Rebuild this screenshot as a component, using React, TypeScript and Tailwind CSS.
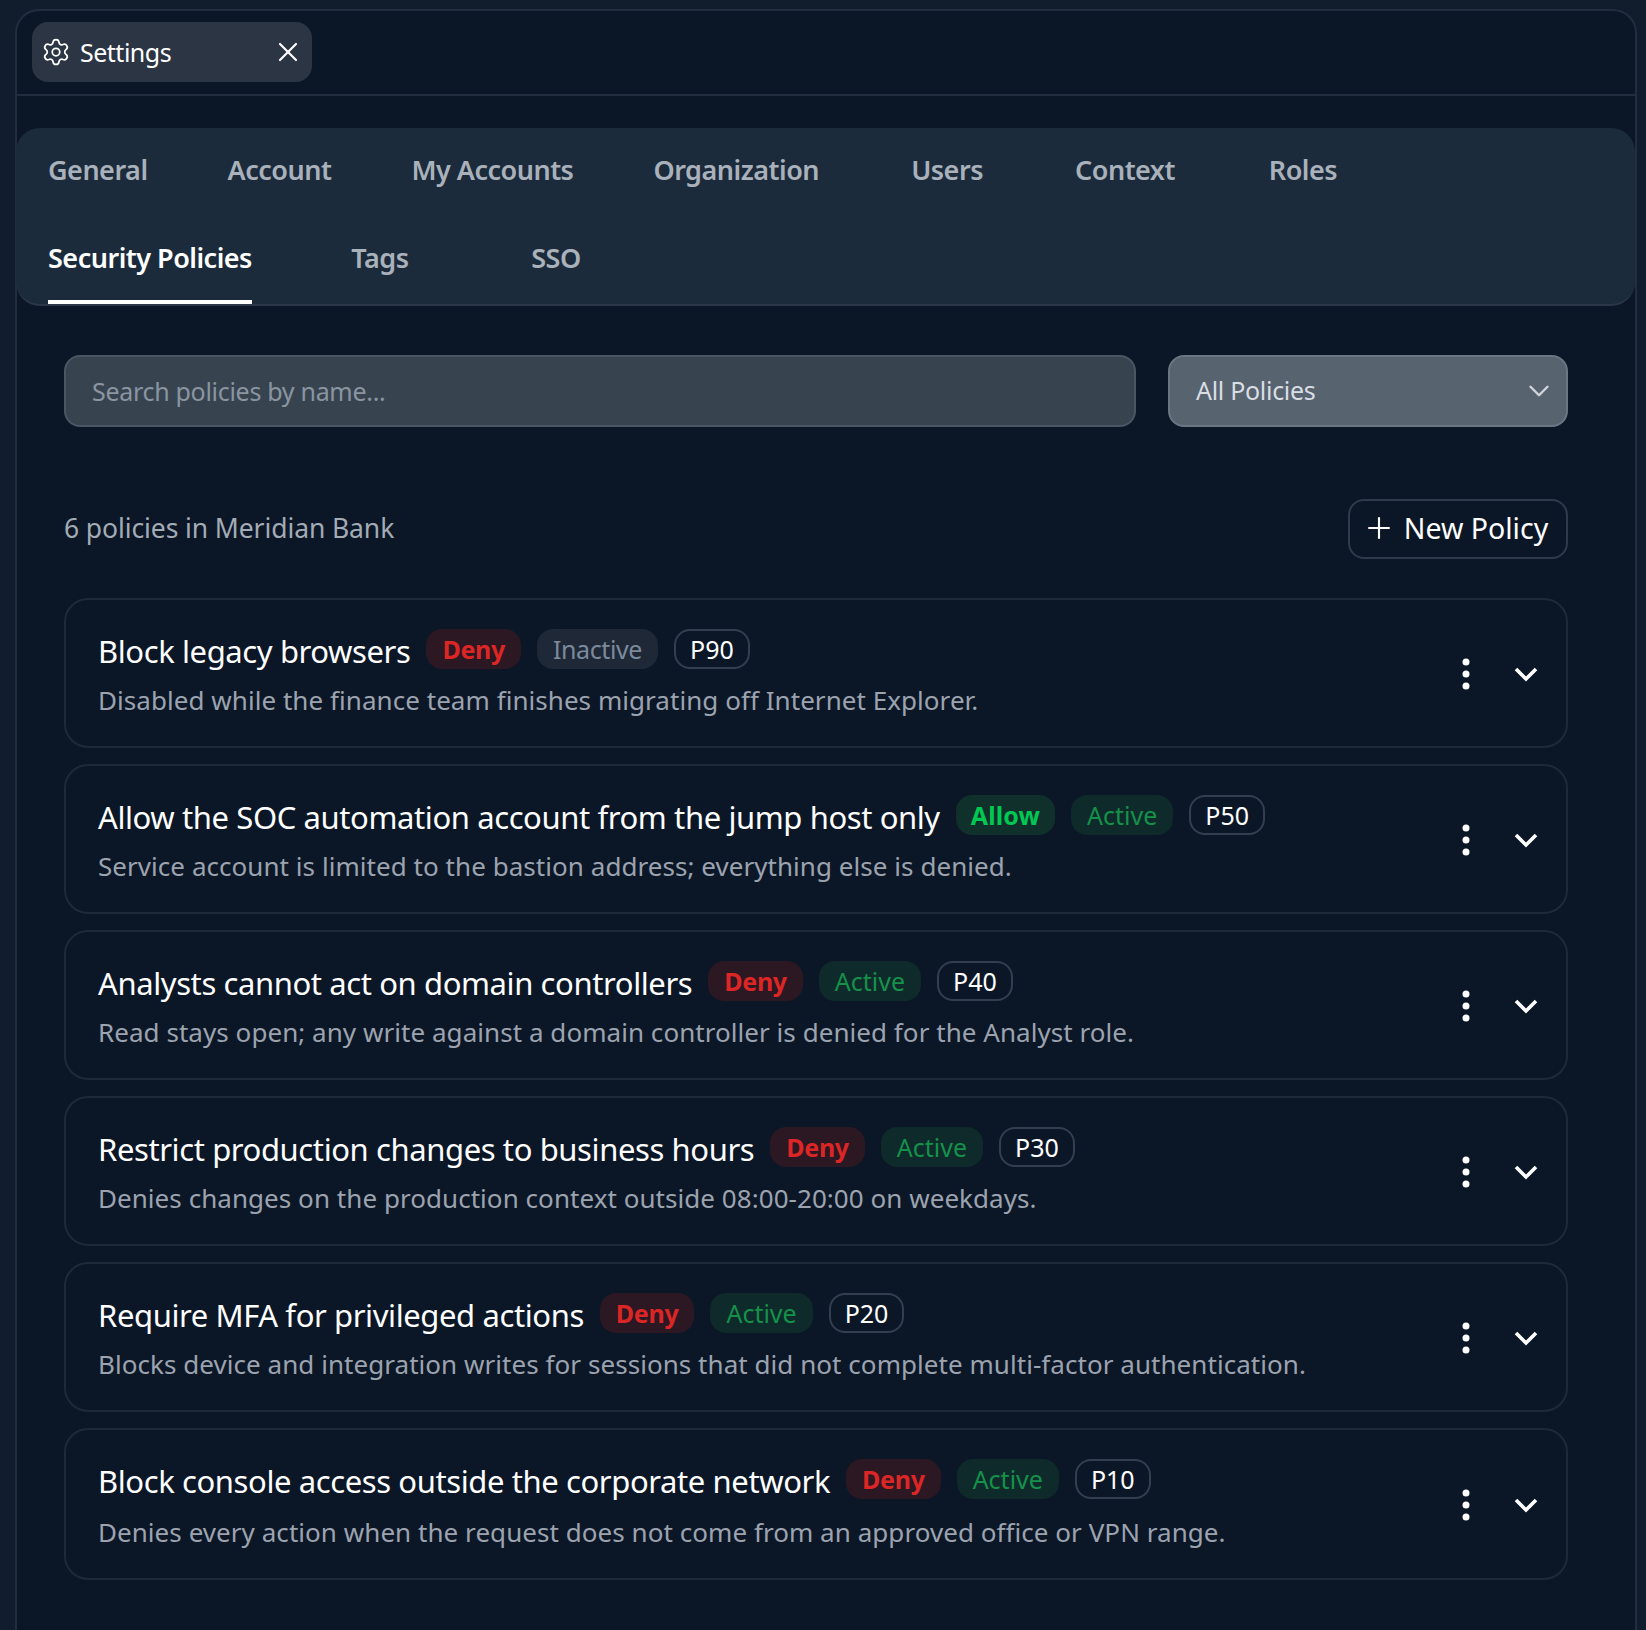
import { ChevronDown, Plus, Settings, X } from "lucide-react";

const tabs = [
  { label: "General" },
  { label: "Account" },
  { label: "My Accounts" },
  { label: "Organization" },
  { label: "Users" },
  { label: "Context" },
  { label: "Roles" },
  { label: "Security Policies", active: true },
  { label: "Tags" },
  { label: "SSO" },
];

const policies = [
  {
    name: "Block legacy browsers",
    effect: "Deny",
    active: false,
    priority: "P90",
    description: "Disabled while the finance team finishes migrating off Internet Explorer.",
  },
  {
    name: "Allow the SOC automation account from the jump host only",
    effect: "Allow",
    active: true,
    priority: "P50",
    description: "Service account is limited to the bastion address; everything else is denied.",
  },
  {
    name: "Analysts cannot act on domain controllers",
    effect: "Deny",
    active: true,
    priority: "P40",
    description: "Read stays open; any write against a domain controller is denied for the Analyst role.",
  },
  {
    name: "Restrict production changes to business hours",
    effect: "Deny",
    active: true,
    priority: "P30",
    description: "Denies changes on the production context outside 08:00-20:00 on weekdays.",
  },
  {
    name: "Require MFA for privileged actions",
    effect: "Deny",
    active: true,
    priority: "P20",
    description: "Blocks device and integration writes for sessions that did not complete multi-factor authentication.",
  },
  {
    name: "Block console access outside the corporate network",
    effect: "Deny",
    active: true,
    priority: "P10",
    description: "Denies every action when the request does not come from an approved office or VPN range.",
  },
];

function PolicyCard({ policy }: { policy: (typeof policies)[number] }) {
  return (
    <div className="group flex items-center justify-between rounded-[24px] border-2 border-[#1e2a3a] pb-[28px] pl-[32px] pr-[28px] pt-[29px] last:pb-[28px]">
      <div>
        <div className="flex h-[40px] items-center">
          <h3 className="mr-[16px] pt-[4px] text-[31px] leading-[40px] tracking-[-0.4px] text-white">{policy.name}</h3>
          {policy.effect === "Deny" ? (
            <span className="mr-[16px] flex h-[40px] items-center rounded-[16px] bg-[#2b1822] px-[16px] pt-[2px] text-[25px] font-bold tracking-[-0.3px] text-[#dc2626]">
              Deny
            </span>
          ) : (
            <span className="mr-[16px] flex h-[40px] items-center rounded-[16px] bg-[#10302c] px-[15px] pt-[2px] text-[25px] font-bold tracking-[0.1px] text-[#00c853]">
              Allow
            </span>
          )}
          {policy.active ? (
            <span className="mr-[16px] flex h-[40px] items-center rounded-[16px] bg-[#0e2a2a] px-[16px] pt-[2px] text-[25px] text-[#15914a]">
              Active
            </span>
          ) : (
            <span className="mr-[16px] flex h-[40px] items-center rounded-[16px] bg-[#1e2837] px-[16px] pt-[2px] text-[25px] tracking-[-0.4px] text-[#7c8a9c]">
              Inactive
            </span>
          )}
          <span className="flex h-[40px] items-center rounded-[16px] border-2 border-[#333f50] px-[14px] pt-[2px] text-[25px] text-white">
            {policy.priority}
          </span>
        </div>
        <p className="mt-[13px] text-[26px] leading-[36px] tracking-[0.05px] text-[#9ca3af] group-last:mt-[15px]">
          {policy.description}
        </p>
      </div>
      <div className="flex items-center gap-[44px]">
        <svg width="8" height="32" viewBox="0 0 8 32" fill="white">
          <circle cx="4" cy="4" r="3.5" />
          <circle cx="4" cy="16" r="3.5" />
          <circle cx="4" cy="28" r="3.5" />
        </svg>
        <svg width="24" height="16" viewBox="0 0 24 16" fill="none" stroke="white" strokeWidth="3.6">
          <path d="M2 3l10 10L22 3" />
        </svg>
      </div>
    </div>
  );
}

export default function App() {
  return (
    <div
      className="flex h-[1630px] flex-col overflow-hidden bg-[#111c2c] pl-[15px] pr-[9px] pt-[9px]"
      style={{ fontFamily: '"Noto Sans", sans-serif' }}
    >
      <div className="flex-1 rounded-t-[24px] border-x-2 border-t-2 border-[#222e3f] bg-[#0b1727]">
        <div className="h-[85px] border-b-2 border-[#222e3f] pl-[15px] pt-[11px]">
          <div className="flex h-[60px] w-[280px] items-center rounded-[16px] bg-[#2b3544] pl-[9px] pr-[8px] text-white">
            <Settings size={30} strokeWidth={1.4} />
            <span className="ml-[9px] flex-1 pt-[1px] text-[25px] tracking-[-0.5px]">Settings</span>
            <X size={32} strokeWidth={1.6} />
          </div>
        </div>

        <nav className="-ml-[1px] mt-[32px] flex h-[178px] flex-wrap content-start gap-x-[80px] rounded-[24px] border-b-2 border-[#2a3748] bg-[#1c2b3c] pl-[32px] pr-[32px]">
          {tabs.map((tab) => (
            <div
              key={tab.label}
              className={`flex h-[88px] min-w-[96px] items-center justify-center text-[27px] font-semibold tracking-[-0.5px] ${
                tab.active ? "border-b-4 border-white text-white" : "pb-[4px] text-[#a9b1bb]"
              }`}
            >
              {tab.label}
            </div>
          ))}
        </nav>

        <div className="pl-[47px] pr-[67px] pt-[49px]">
          <div className="flex gap-[32px]">
            <input
              placeholder="Search policies by name..."
              className="h-[72px] flex-1 rounded-[16px] border-2 border-[#4a5663] bg-[#374450] px-[26px] text-[25px] tracking-[-0.3px] outline-none placeholder:text-[#8a95a1]"
            />
            <div className="flex h-[72px] w-[400px] items-center justify-between rounded-[16px] border-2 border-[#6b7683] bg-[#57636f] pl-[26px] pr-[10px] text-[25px] tracking-[-0.3px] text-[#d9dee4]">
              All Policies
              <ChevronDown size={34} strokeWidth={1.7} className="text-[#d1d5db]" />
            </div>
          </div>

          <div className="mt-[72px] flex items-center justify-between">
            <span className="text-[26.5px] tracking-[-0.1px] text-[#a3abb5]">6 policies in Meridian Bank</span>
            <button className="flex h-[60px] w-[220px] items-center justify-center gap-[8px] rounded-[16px] border-2 border-[#2f3b4c] pb-[2px] pr-[6px] text-[28.5px] text-white">
              <Plus size={34} strokeWidth={1.5} />
              New Policy
            </button>
          </div>

          <div className="mt-[39px] flex flex-col gap-[16px]">
            {policies.map((policy) => (
              <PolicyCard key={policy.name} policy={policy} />
            ))}
          </div>
        </div>
      </div>
    </div>
  );
}
